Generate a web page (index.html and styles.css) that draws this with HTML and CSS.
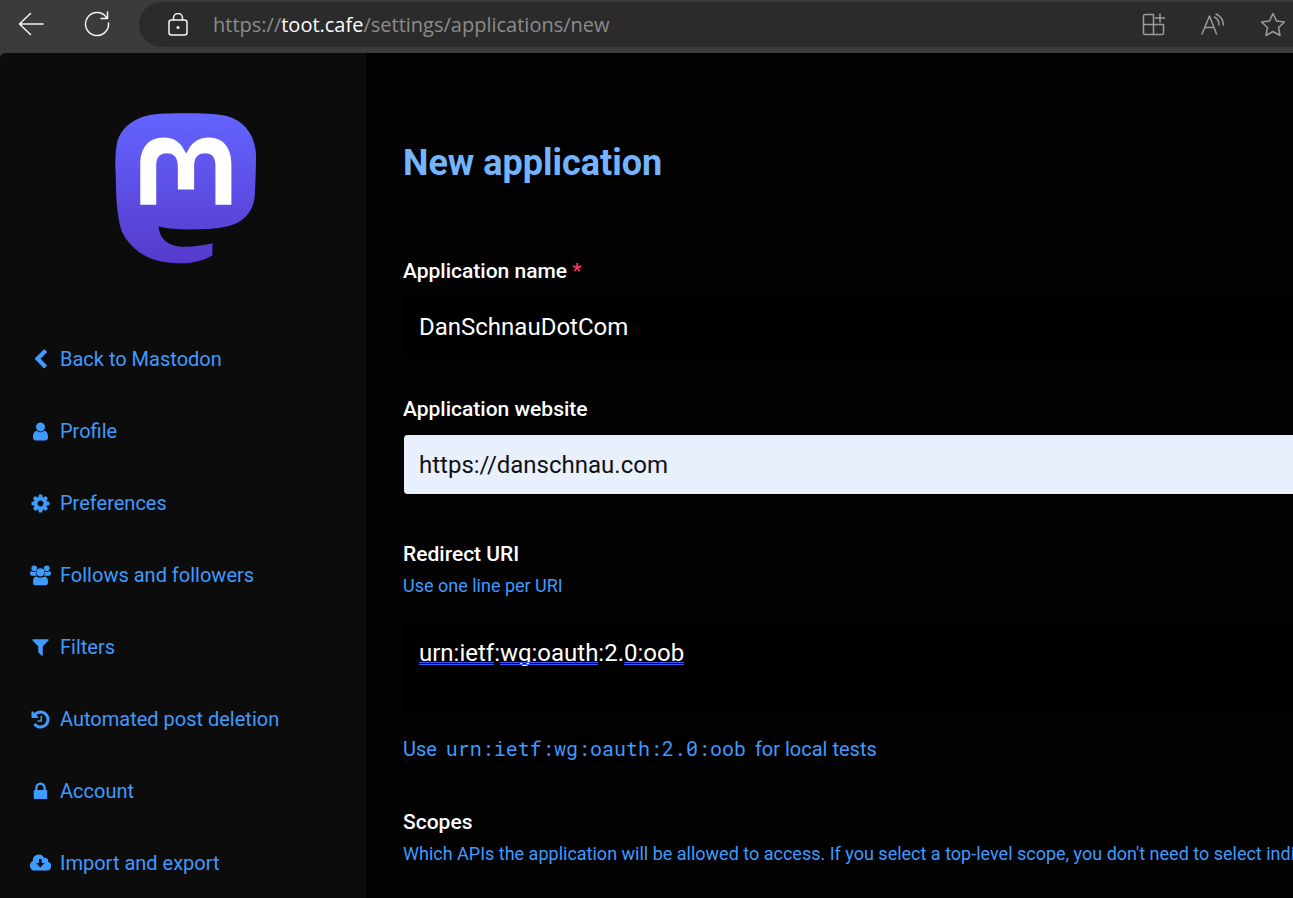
FILE: index.html
```html
<!DOCTYPE html>
<html lang="en">
<head>
<meta charset="utf-8">
<meta name="viewport" content="width=device-width, initial-scale=1">
<title>New application - toot.cafe</title>
<link rel="stylesheet" href="styles.css">
</head>
<body>
<header class="toolbar">
  <button class="tool back" aria-label="Back"><svg width="26" height="24" viewBox="0 0 26 24"><path d="M25 12H1.500M12.500 1.500L1.500 12L12.500 22.500"/></svg></button>
  <button class="tool reload" aria-label="Reload"><svg width="26" height="26" viewBox="0 0 26 26"><path d="M22.500 6.500A11.500 11.500 0 1 0 24.500 12M23.500 1V7.500H17"/></svg></button>
  <div class="address">
    <button class="tool site-info" aria-label="Site information"><svg width="20" height="24" viewBox="0 0 20 24"><rect x="1" y="7" width="18" height="15" rx="2.500"/><path d="M5.500 7V5a4.500 4.500 0 0 1 9 0V7"/><circle class="dot" cx="10" cy="14.500" r="1.500"/></svg></button>
    <div class="url">https://<span class="host">toot.cafe</span>/settings/applications/new</div>
    <div class="actions">
      <button class="tool" aria-label="Add app"><svg width="24" height="24" viewBox="0 0 24 24"><path d="M11.500 21.500V1.500H3A1.500 1.500 0 0 0 1.500 3V20A1.500 1.500 0 0 0 3 21.500H20A1.500 1.500 0 0 0 21.500 20V11.500H1.500M18 1V9M13.500 5H22.500"/></svg></button>
      <button class="tool" aria-label="Read aloud"><svg width="24" height="24" viewBox="0 0 24 24"><path d="M1 21L8.500 3L15.500 21M3.500 14.500H13M13.500 4A9 9 0 0 1 18 12M15 1A13 13 0 0 1 22.500 12"/></svg></button>
      <button class="tool" aria-label="Add to favorites"><svg width="26" height="26" viewBox="0 0 26 26"><path d="M13 1.500L16.500 9L24.500 10L18.500 15.500L20 23.500L13 19.500L6 23.500L7.500 15.500L1.500 10L9.500 9Z"/></svg></button>
    </div>
  </div>
</header>
<div class="page">
  <aside class="sidebar">
    <a class="logo" href="#" aria-label="Mastodon">
      <svg width="141" height="151" viewBox="46 38 424 452">
        <defs><linearGradient id="purple" x1="0" y1="0" x2="0" y2="1"><stop offset="0" stop-color="#6364ff"/><stop offset="1" stop-color="#563acc"/></linearGradient></defs>
        <path fill="url(#purple)" d="M258 38C190 38 162 41 148 44C100 54 62 84 52 128C46 160 46 195 48 220C49 270 50 310 55 340C58 365 62 380 67 393C82 430 125 465 158 476C195 489 240 491 275 487C300 483 325 475 339 465V429C310 436 285 439 255 439C205 439 180 415 177 378C205 385 235 387 270 387C320 387 345 386 372 380C425 372 460 340 466 290C468 260 470 200 470 165C468 90 420 52 370 44C345 40 310 38 258 38Z"/>
        <path fill="#fff" d="M122 313V190C122 145 145 111 192 111C222 111 240 124 252 145L260 159L268 145C280 124 300 111 328 111C373 111 396 145 396 190V313H348V194C348 170 338 158 317 158C294 158 284 172 284 197V267H235V197C235 172 224 158 202 158C181 158 170 170 170 194V313Z"/>
      </svg>
    </a>
    <nav class="menu">
      <a href="#"><svg viewBox="0 0 1792 1792"><path d="M1427 301l-531 531 531 531q19 19 19 45t-19 45l-166 166q-19 19-45 19t-45-19l-742-742q-19-19-19-45t19-45l742-742q19-19 45-19t45 19l166 166q19 19 19 45t-19 45z"/></svg>Back to Mastodon</a>
      <a href="#"><svg viewBox="0 0 1792 1792"><path d="M1536 1399q0 109-62.500 187t-150.500 78h-854q-88 0-150.500-78t-62.500-187q0-85 8.500-160.500t31.500-152 58.500-131 94-89 134.500-34.500q131 128 313 128t313-128q76 0 134.500 34.500t94 89 58.500 131 31.500 152 8.500 160.500zm-256-887q0 159-112.500 271.500t-271.500 112.500-271.500-112.500-112.500-271.500 112.500-271.500 271.500-112.500 271.500 112.500 112.500 271.500z"/></svg>Profile</a>
      <a href="#"><svg viewBox="0 0 1792 1792"><path d="M1152 896q0-106-75-181t-181-75-181 75-75 181 75 181 181 75 181-75 75-181zm512-109v222q0 12-8 23t-20 13l-185 28q-19 54-39 91 35 50 107 138 10 12 10 25t-9 23q-27 37-99 108t-94 71q-12 0-26-9l-138-108q-44 23-91 38-16 136-29 186-7 28-36 28h-222q-14 0-24.500-8.500t-11.500-21.500l-28-184q-49-16-90-37l-141 107q-10 9-25 9-14 0-25-11-126-114-165-168-7-10-7-23 0-12 8-23 15-21 51-66.500t54-70.500q-27-50-41-99l-183-27q-13-2-21-12.500t-8-23.500v-222q0-12 8-23t19-13l186-28q14-46 39-92-40-57-107-138-10-12-10-24 0-10 9-23 26-36 98.500-107.500t94.500-71.500q13 0 26 10l138 107q44-23 91-38 16-136 29-186 7-28 36-28h222q14 0 24.500 8.500t11.500 21.500l28 184q49 16 90 37l142-107q9-9 24-9 13 0 25 10 129 119 165 170 7 8 7 22 0 12-8 23-15 21-51 66.500t-54 70.500q26 50 41 98l183 28q13 2 21 12.500t8 23.500z"/></svg>Preferences</a>
      <a href="#"><svg viewBox="0 0 21 21"><circle cx="4.200" cy="3.200" r="2.800"/><circle cx="16.800" cy="3.200" r="2.800"/><path d="M1.500 6Q3.800 7.600 5.900 6.300Q5.400 9 7 10.700H2.200Q0 10.700 0 8.700Q0 6 1.500 6ZM19.500 6Q17.200 7.600 15.100 6.300Q15.600 9 14 10.700H18.800Q21 10.700 21 8.700Q21 6 19.500 6Z"/><circle cx="10.500" cy="7.300" r="4.100"/><path d="M6.300 11.400Q10.500 14 14.700 11.400Q18 11.500 18 17.200Q18 20.300 15.300 20.300H5.700Q3 20.300 3 17.200Q3 11.500 6.300 11.400Z"/></svg>Follows and followers</a>
      <a href="#"><svg viewBox="0 0 1792 1792"><path d="M1595 231q17 41-14 70l-493 493v742q0 42-39 59-13 5-25 5-27 0-45-19l-256-256q-19-19-19-45v-486l-493-493q-31-29-14-70 17-39 59-39h1280q42 0 59 39z"/></svg>Filters</a>
      <a href="#"><svg viewBox="0 0 1792 1792"><path d="M1664 896q0 156-61 298t-164 245-245 164-298 61q-172 0-327-72.500t-264-204.500q-7-10-6.500-22.500t8.500-20.500l137-138q10-9 25-9 16 2 23 12 73 95 179 147t225 52q104 0 198.500-40.500t163.500-109.500 109.500-163.500 40.500-198.500-40.500-198.500-109.500-163.500-163.500-109.500-198.500-40.500q-98 0-188 35.500t-160 101.500l137 138q31 30 14 69-17 40-59 40h-448q-26 0-45-19t-19-45v-448q0-42 40-59 39-17 69 14l130 129q107-101 244.500-156.500t284.500-55.500q156 0 298 61t245 164 164 245 61 298zm-640-288v448q0 14-9 23t-23 9h-320q-14 0-23-9t-9-23v-64q0-14 9-23t23-9h224v-352q0-14 9-23t23-9h64q14 0 23 9t9 23z"/></svg>Automated post deletion</a>
      <a href="#"><svg viewBox="0 0 1792 1792"><path d="M640 768h512v-192q0-106-75-181t-181-75-181 75-75 181v192zm832 96v576q0 40-28 68t-68 28h-960q-40 0-68-28t-28-68v-576q0-40 28-68t68-28h32v-192q0-184 132-316t316-132 316 132 132 316v192h32q40 0 68 28t28 68z"/></svg>Account</a>
      <a href="#"><svg viewBox="0 0 21 21"><path fill-rule="evenodd" d="M5 17.500A5 5 0 0 1 2.800 8A5.900 5.900 0 0 1 14 5A3 3 0 0 1 18 8.700A4.500 4.500 0 0 1 16.500 17.500ZM9 6V10H6.200L10.300 14.500L14.500 10H11.700V6Z"/></svg>Import and export</a>
    </nav>
  </aside>
  <main class="content">
    <h1>New application</h1>
    <form class="form">
      <div class="field">
        <label for="name">Application name <abbr title="required">*</abbr></label>
        <input id="name" type="text" value="DanSchnauDotCom">
      </div>
      <div class="field website">
        <label for="website">Application website</label>
        <input id="website" class="autofilled" type="text" value="https://danschnau.com">
      </div>
      <div class="field redirect">
        <label for="redirect">Redirect URI</label>
        <p class="hint">Use one line per URI</p>
        <div class="editor">
          <textarea id="redirect" rows="2" spellcheck="false">urn:ietf:wg:oauth:2.0:oob</textarea>
          <div class="marks" aria-hidden="true"><i class="mark scheme"></i><i class="mark path"></i><i class="mark suffix"></i></div>
        </div>
        <p class="note">Use <code>urn:ietf:wg:oauth:2.0:oob</code> for local tests</p>
      </div>
      <div class="field scopes">
        <h2>Scopes</h2>
        <p class="hint">Which APIs the application will be allowed to access. If you select a top-level scope, you don't need to select individual ones.</p>
      </div>
    </form>
  </main>
</div>
</body>
</html>
```

FILE: styles.css
```css
* {
  box-sizing: border-box;
}

body {
  margin: 0;
  min-height: 100vh;
  display: flex;
  flex-direction: column;
  overflow: hidden;
  background: #3b3b3b;
  font-family: Roboto, "Liberation Sans", sans-serif;
}

h1, h2, p {
  margin: 0;
}

button {
  padding: 0;
  border: 0;
  background: none;
  color: inherit;
}

/* Browser toolbar */
.toolbar {
  display: flex;
  align-items: flex-start;
  height: 53px;
  padding: 2px 0 6px 18px;
  color: #f5f5f5;
}

.tool {
  display: flex;
  align-items: center;
  height: 43px;
}

.tool svg {
  fill: none;
  stroke: currentColor;
  stroke-width: 1.5;
  stroke-linecap: round;
  stroke-linejoin: round;
}

.tool .dot {
  fill: currentColor;
  stroke: none;
}

.reload {
  margin: 0 29px 0 40px;
}

.address {
  flex: 1;
  display: flex;
  align-items: center;
  height: 45px;
  padding: 0 7px 0 29px;
  border-radius: 23px 0 0 23px;
  background: #2b2b2b;
}

.url {
  margin-left: 25px;
  color: #8c8c8c;
  font: 20px "Open Sans", "Noto Sans", sans-serif;
  white-space: nowrap;
}

.host {
  color: #fff;
}

.actions {
  display: flex;
  gap: 35px;
  margin-left: auto;
  color: #9b9b9b;
}

/* Page */
.page {
  flex: 1;
  display: flex;
  border-top-left-radius: 6px;
  overflow: hidden;
  background: #020202;
}

.sidebar {
  flex: none;
  width: 366px;
  padding: 60px 0 0 5px;
  background: #0c0c0c;
}

.logo {
  display: flex;
  justify-content: center;
  margin-bottom: 59px;
}

.menu a {
  display: flex;
  align-items: center;
  gap: 9px;
  height: 72px;
  padding-left: 25px;
  color: #3f9bff;
  font-size: 20px;
  text-decoration: none;
}

.menu svg {
  width: 21px;
  height: 21px;
  fill: currentColor;
}

.content {
  flex: 1;
  min-width: 0;
  padding: 88px 0 0 37px;
}

h1 {
  color: #73b4ff;
  font-size: 36px;
  font-weight: 700;
  line-height: 44px;
}

.form {
  padding-top: 74px;
}

label, h2 {
  display: block;
  color: #fff;
  font-size: 21px;
  font-weight: 500;
  line-height: 24px;
}

abbr {
  color: #ff3860;
  text-decoration: none;
}

input, textarea {
  display: block;
  width: 100%;
  margin: 0;
  padding: 15px;
  border: 1px solid #000;
  border-right: 0;
  border-radius: 4px 0 0 4px;
  outline: 0;
  background: #000;
  color: #fff;
  font: 24px/30px Roboto, "Liberation Sans", sans-serif;
}

input {
  height: 61px;
  margin-top: 13px;
}

.autofilled {
  background: #e8f0fe;
  background-clip: padding-box;
  color: #101010;
}

.website {
  margin-top: 40px;
}

.redirect {
  margin-top: 47px;
}

.hint {
  margin-top: 8px;
  color: #3f9bff;
  font-size: 18px;
  line-height: 24px;
  white-space: nowrap;
}

.editor {
  position: relative;
  margin-top: 24px;
}

textarea {
  height: 90px;
  resize: none;
  overflow: hidden;
}

.marks {
  position: absolute;
  top: 40px;
  left: 16px;
  display: flex;
}

.mark {
  height: 3px;
  border: solid #3557ff;
  border-width: 1px 0;
}

.scheme {
  width: 75px;
}

.path {
  width: 98px;
  margin: 0 26px 0 6px;
}

.suffix {
  width: 60px;
}

.note {
  margin-top: 23px;
  color: #3f9bff;
  font-size: 20px;
  line-height: 24px;
}

code {
  padding: 2px 4px;
  border-radius: 4px;
  background: #000;
  font: 20px "Roboto Mono", "DejaVu Sans Mono", monospace;
}

.scopes {
  margin-top: 49px;
}
```
